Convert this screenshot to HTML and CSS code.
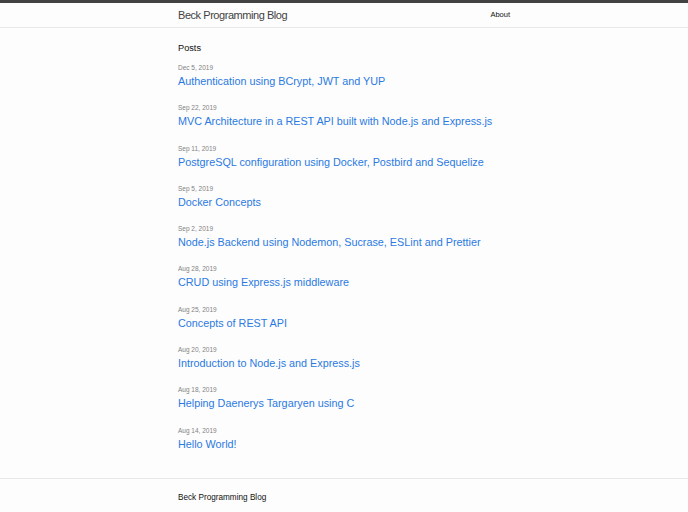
FILE: index.html
```html
<!DOCTYPE html>
<html lang="en">
  <head>
    <meta charset="UTF-8" />
    <meta name="viewport" content="width=device-width, initial-scale=1.0" />
    <title>Beck Programming Blog</title>
    <link rel="stylesheet" href="styles.css">
  </head>
  <body>
    <header class="site-header">
      <div class="wrapper header-row">
        <a class="site-title" href="#">Beck Programming Blog</a>
        <nav class="site-nav">
          <a class="page-link" href="#">About</a>
        </nav>
      </div>
    </header>

    <main class="page-content">
      <div class="wrapper">
        <h2 class="post-list-heading">Posts</h2>
        <ul class="post-list">
          <li>
            <span class="post-meta">Dec 5, 2019</span>
            <a class="post-link" href="#">Authentication using BCrypt, JWT and YUP</a>
          </li>
          <li>
            <span class="post-meta">Sep 22, 2019</span>
            <a class="post-link" href="#">MVC Architecture in a REST API built with Node.js and Express.js</a>
          </li>
          <li>
            <span class="post-meta">Sep 11, 2019</span>
            <a class="post-link" href="#">PostgreSQL configuration using Docker, Postbird and Sequelize</a>
          </li>
          <li>
            <span class="post-meta">Sep 5, 2019</span>
            <a class="post-link" href="#">Docker Concepts</a>
          </li>
          <li>
            <span class="post-meta">Sep 2, 2019</span>
            <a class="post-link" href="#">Node.js Backend using Nodemon, Sucrase, ESLint and Prettier</a>
          </li>
          <li>
            <span class="post-meta">Aug 28, 2019</span>
            <a class="post-link" href="#">CRUD using Express.js middleware</a>
          </li>
          <li>
            <span class="post-meta">Aug 25, 2019</span>
            <a class="post-link" href="#">Concepts of REST API</a>
          </li>
          <li>
            <span class="post-meta">Aug 20, 2019</span>
            <a class="post-link" href="#">Introduction to Node.js and Express.js</a>
          </li>
          <li>
            <span class="post-meta">Aug 18, 2019</span>
            <a class="post-link" href="#">Helping Daenerys Targaryen using C</a>
          </li>
          <li>
            <span class="post-meta">Aug 14, 2019</span>
            <a class="post-link" href="#">Hello World!</a>
          </li>
        </ul>
      </div>
    </main>

    <footer class="site-footer">
      <div class="wrapper">
        <p class="footer-title">Beck Programming Blog</p>
      </div>
    </footer>
  </body>
</html>
```

FILE: styles.css
```css
body {
  margin: 0;
  background-color: #fdfdfd;
  color: #111111;
  font-family: "Liberation Sans", Arial, sans-serif;
}

a {
  text-decoration: none;
}

.wrapper {
  width: 332px;
  margin: 0 auto;
}

.site-header {
  border-top: 3px solid #424242;
  border-bottom: 1px solid #e8e8e8;
}

.header-row {
  display: flex;
  justify-content: space-between;
  align-items: center;
  height: 24px;
}

.site-title {
  font-size: 11px;
  font-weight: 300;
  color: #424242;
  letter-spacing: -0.45px;
  line-height: 24px;
}

.page-link {
  font-size: 7.5px;
  color: #111111;
  line-height: 24px;
}

.page-content {
  padding: 14px 0 12px;
}

.post-list-heading {
  margin: 0 0 9px;
  font-size: 9.2px;
  font-weight: normal;
  line-height: 12px;
}

.post-list {
  list-style: none;
  margin: 0;
  padding: 0;
}

.post-list li {
  height: 40.3px;
}

.post-meta {
  display: block;
  font-size: 6.5px;
  line-height: 10px;
  color: #828282;
}

.post-link {
  display: block;
  font-size: 10.8px;
  line-height: 16px;
  color: #2a7ae2;
  white-space: nowrap;
}

.site-footer {
  border-top: 1px solid #e8e8e8;
  padding: 13px 0;
}

.footer-title {
  margin: 0;
  font-size: 8.2px;
  line-height: 12px;
}
```
